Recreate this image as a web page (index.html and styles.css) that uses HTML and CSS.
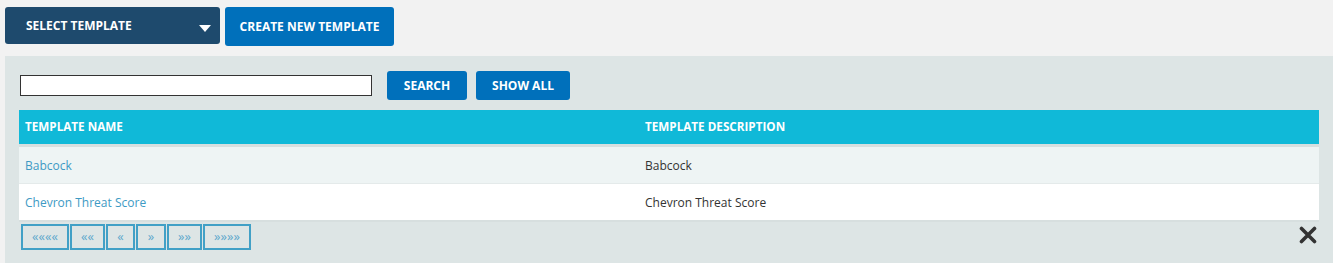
FILE: index.html
```html
<!DOCTYPE html>
<html>
<head>
<meta charset="utf-8">
<link rel="stylesheet" href="styles.css">
</head>
<body>
<div class="topbar">
  <button class="btn btn-dark select">
    <span>SELECT TEMPLATE</span>
    <span class="caret"></span>
  </button>
  <button class="btn btn-blue create">CREATE NEW TEMPLATE</button>
</div>
<div class="panel">
  <div class="searchrow">
    <input class="search-input" type="text">
    <button class="btn btn-blue small search">SEARCH</button>
    <button class="btn btn-blue small showall">SHOW ALL</button>
  </div>
  <table class="grid">
    <thead>
      <tr><th class="c1">TEMPLATE NAME</th><th>TEMPLATE DESCRIPTION</th></tr>
    </thead>
    <tbody>
      <tr class="odd"><td class="c1"><a href="#">Babcock</a></td><td>Babcock</td></tr>
      <tr class="even"><td class="c1"><a href="#">Chevron Threat Score</a></td><td>Chevron Threat Score</td></tr>
    </tbody>
  </table>
  <div class="footer">
    <div class="pager">
      <span class="pg p1">&laquo;&laquo;&laquo;&laquo;</span>
      <span class="pg p2">&laquo;&laquo;</span>
      <span class="pg p3">&laquo;</span>
      <span class="pg p4">&raquo;</span>
      <span class="pg p5">&raquo;&raquo;</span>
      <span class="pg p6">&raquo;&raquo;&raquo;&raquo;</span>
    </div>
    <svg class="close" width="18" height="18" viewBox="0 0 18 18"><path d="M2.5 2.5 L15.5 15.5 M15.5 2.5 L2.5 15.5" stroke="#333" stroke-width="3.6" stroke-linecap="round"/></svg>
  </div>
</div>
</body>
</html>
```
FILE: styles.css
```css
* { box-sizing: border-box; }
html, body { margin: 0; padding: 0; }
body {
  background: #f2f2f2;
  font-family: "Open Sans", "Liberation Sans", sans-serif;
  font-size: 12px;
  width: 1333px;
  height: 263px;
  overflow: hidden;
}
.topbar {
  display: flex;
  align-items: flex-start;
  padding: 7px 0 0 5px;
  gap: 5px;
  height: 56px;
}
.btn {
  border: none;
  color: #fff;
  font-family: "Open Sans", sans-serif;
  font-weight: 700;
  font-size: 12px;
  border-radius: 3px;
  cursor: pointer;
  padding: 0;
  margin: 0;
}
.btn-dark { background: #1e4a6d; }
.btn-blue { background: #0070bb; }
.select {
  width: 215px;
  height: 37px;
  display: flex;
  align-items: center;
  justify-content: space-between;
  padding: 0 9px 0 21px;
}
.caret {
  width: 0; height: 0;
  border-left: 6px solid transparent;
  border-right: 6px solid transparent;
  border-top: 7px solid #fff;
  margin-top: 5px;
}
.create {
  width: 169px;
  height: 39px;
}
.panel {
  background: #dde5e5;
  margin-left: 5px;
  height: 207px;
  padding: 15px 14px 0 14px;
}
.searchrow {
  display: flex;
  align-items: center;
  height: 29px;
  padding-left: 1px;
}
.search-input {
  width: 352px;
  height: 21px;
  border: 1px solid #333;
  background: #fff;
  margin: 0 15px 0 0;
  padding: 0;
}
.small { height: 29px; }
.search { width: 80px; margin-right: 9px; }
.showall { width: 94px; }
.grid {
  margin-top: 10px;
  width: 1300px;
  border-collapse: collapse;
}
.grid th {
  background: #10b9d8;
  color: #fff;
  font-weight: 700;
  text-align: left;
  height: 35px;
  padding: 0 6px 1px 6px;
  border-bottom: 3px solid #d7dfdf;
  font-size: 11.7px;
}
.grid td {
  padding: 0 6px;
  color: #333;
  font-size: 12px;
}
.grid tr.odd td { height: 38px; padding-top: 1px; }
.grid tr.even td { height: 38px; padding-top: 1px; }
.grid .c1 { width: 620px; }
.grid tr.odd td { background: #eef4f4; border-bottom: 1px solid #e4eaea; }
.grid tr.even td { background: #fff; border-bottom: 2px solid #d7dfdf; }
.grid a { color: #3e9ac4; text-decoration: none; }
.footer {
  display: flex;
  justify-content: space-between;
  align-items: flex-start;
  padding-top: 2px;
}
.pager { display: flex; gap: 1px; padding-left: 2px; }
.pg {
  border: 2px solid #41a0c6;
  height: 26px;
  display: flex;
  align-items: center;
  justify-content: center;
  color: #5ea8cc;
  font-size: 13px;
  font-weight: 400;
  line-height: 1;
  padding-bottom: 2px;
}
.p1 { width: 48px; }
.p2 { width: 35px; }
.p3 { width: 29px; }
.p4 { width: 30px; }
.p5 { width: 35px; }
.p6 { width: 48px; }
.close { margin: 2px 2px 0 0; }
```
